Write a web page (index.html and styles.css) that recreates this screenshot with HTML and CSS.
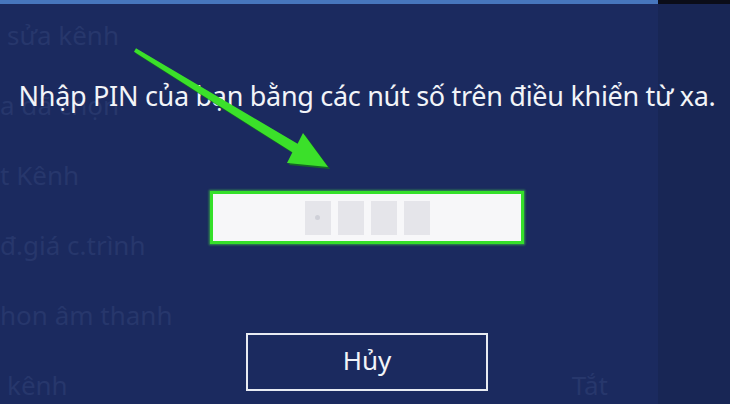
FILE: index.html
```html
<!DOCTYPE html>
<html lang="vi">
<head>
<meta charset="utf-8">
<title>Nhập PIN</title>
<link rel="stylesheet" href="styles.css">
</head>
<body>
<div class="screen">
  <div class="topbar">
    <div class="topbar-main"></div>
    <div class="topbar-side"></div>
  </div>
  <div class="content">
    <ul class="menu">
      <li class="menu-row indent"><span>sửa kênh</span></li>
      <li class="menu-row"><span>a đã chọn</span></li>
      <li class="menu-row"><span>t Kênh</span></li>
      <li class="menu-row"><span>đ.giá c.trình</span></li>
      <li class="menu-row"><span>hon âm thanh</span></li>
      <li class="menu-row indent"><span>kênh</span><span class="menu-value">Tắt</span></li>
    </ul>
    <div class="side"></div>
  </div>

  <div class="dialog">
    <p class="dialog-title">Nhập PIN của bạn bằng các nút số trên điều khiển từ xa.</p>
    <div class="pin-box">
      <div class="pin-digit active"><span class="cursor"></span></div>
      <div class="pin-digit"></div>
      <div class="pin-digit"></div>
      <div class="pin-digit"></div>
    </div>
    <button class="cancel-btn">Hủy</button>
  </div>

  <svg class="arrow" width="730" height="404" viewBox="0 0 730 404">
    <polygon class="arrow-shadow" points="137,50.3 299.6,145.7 305,135 330,169 289,165 294.4,154.3 136,53.7"/>
    <polygon class="arrow-body" points="136,48.3 297.6,143.7 303,133 328,167 287,163 292.4,152.3 134,51.7"/>
  </svg>
</div>
</body>
</html>
```

FILE: styles.css
```css
* { box-sizing: border-box; }

html, body {
  margin: 0;
  padding: 0;
  width: 730px;
  height: 404px;
  overflow: hidden;
  background: #1b2a5f;
  font-family: "Noto Sans", "Open Sans", "DejaVu Sans", sans-serif;
}

.screen {
  position: relative;
  width: 730px;
  height: 404px;
  overflow: hidden;
  display: flex;
  flex-direction: column;
}

.topbar {
  display: flex;
  height: 4px;
  flex: none;
}
.topbar-main { flex: 1; background: #4776bd; }
.topbar-side { width: 72px; background: #0b0d18; }

.content {
  flex: 1;
  display: flex;
}

.menu {
  flex: 1;
  margin: 0;
  padding: 0;
  list-style: none;
  background: #1b2a5f;
}

.menu-row {
  display: flex;
  height: 70px;
  line-height: 62px;
  font-size: 26px;
  color: #27376c;
  padding-right: 50px;
}
.menu-row.indent { padding-left: 7px; }
.menu-value { margin-left: auto; }

.side {
  width: 72px;
  background: #182655;
}

.dialog {
  position: absolute;
  inset: 0;
  display: flex;
  flex-direction: column;
  align-items: center;
  padding-top: 79px;
  padding-left: 4px;
}

.dialog-title {
  margin: 0;
  font-size: 27px;
  letter-spacing: -0.3px;
  line-height: 34px;
  color: #f2f4f8;
  white-space: nowrap;
}

.pin-box {
  margin-top: 78px;
  width: 314px;
  height: 53px;
  border: 3px solid #35e02a;
  background: #f7f7f9;
  display: flex;
  justify-content: center;
  align-items: center;
  gap: 7px;
  box-shadow: 0 0 2px 1px rgba(80, 255, 60, 0.5);
}

.pin-digit {
  width: 26px;
  height: 34px;
  background: #e5e5ea;
  display: flex;
  align-items: center;
  justify-content: center;
}

.cursor {
  width: 5px;
  height: 5px;
  border-radius: 50%;
  background: #cfd0d8;
}

.cancel-btn {
  margin-top: 89px;
  width: 242px;
  height: 58px;
  border: 2px solid #e8ebf2;
  background: #1b2a5f;
  color: #f2f4f8;
  font-family: inherit;
  font-size: 26px;
  line-height: 1;
  padding: 0 0 4px;
}

.arrow {
  position: absolute;
  left: 0;
  top: 0;
  pointer-events: none;
}
.arrow-shadow { fill: #137a18; opacity: 0.8; }
.arrow-body { fill: #3be02a; }
```
